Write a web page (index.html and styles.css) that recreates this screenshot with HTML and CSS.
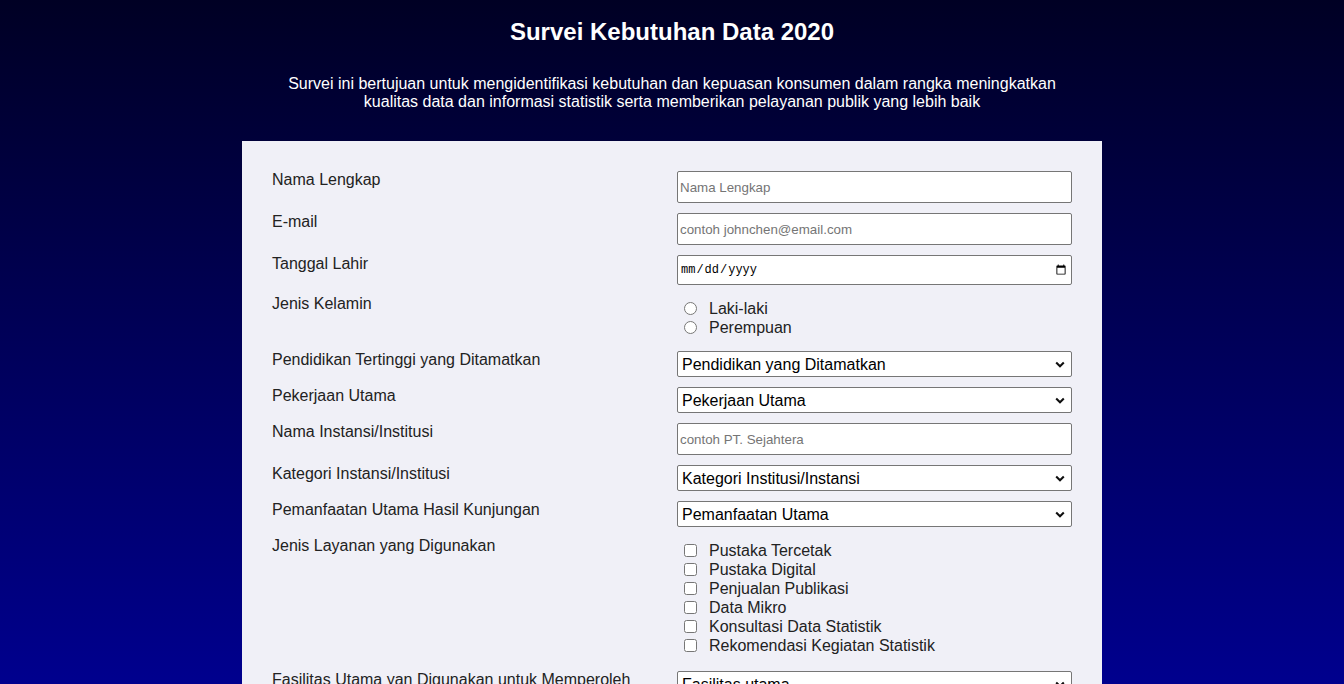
FILE: index.html
```html
<!DOCTYPE html>
<html lang="id">
<head>
<meta charset="utf-8">
<title>Survei Kebutuhan Data 2020</title>
<link rel="stylesheet" href="styles.css">
</head>
<body>
<header class="header">
  <h1 class="title">Survei Kebutuhan Data 2020</h1>
  <p class="intro">Survei ini bertujuan untuk mengidentifikasi kebutuhan dan kepuasan konsumen dalam rangka meningkatkan kualitas data dan informasi statistik serta memberikan pelayanan publik yang lebih baik</p>
</header>
<main class="card">
  <form class="form">
    <label class="label" for="nama">Nama Lengkap</label>
    <input class="field text" id="nama" type="text" placeholder="Nama Lengkap">

    <label class="label" for="email">E-mail</label>
    <input class="field text" id="email" type="email" placeholder="contoh johnchen@email.com">

    <label class="label" for="tgl">Tanggal Lahir</label>
    <input class="field date" id="tgl" type="date">

    <div class="label">Jenis Kelamin</div>
    <div class="choices radios">
      <label class="choice"><input class="radio" type="radio" name="jk"><span>Laki-laki</span></label>
      <label class="choice"><input class="radio" type="radio" name="jk"><span>Perempuan</span></label>
    </div>

    <label class="label" for="pend">Pendidikan Tertinggi yang Ditamatkan</label>
    <select class="field select" id="pend"><option>Pendidikan yang Ditamatkan</option></select>

    <label class="label" for="kerja">Pekerjaan Utama</label>
    <select class="field select" id="kerja"><option>Pekerjaan Utama</option></select>

    <label class="label" for="inst">Nama Instansi/Institusi</label>
    <input class="field text" id="inst" type="text" placeholder="contoh PT. Sejahtera">

    <label class="label" for="kat">Kategori Instansi/Institusi</label>
    <select class="field select" id="kat"><option>Kategori Institusi/Instansi</option></select>

    <label class="label" for="manfaat">Pemanfaatan Utama Hasil Kunjungan</label>
    <select class="field select" id="manfaat"><option>Pemanfaatan Utama</option></select>

    <div class="label">Jenis Layanan yang Digunakan</div>
    <div class="choices checks">
      <label class="choice"><input class="check" type="checkbox"><span>Pustaka Tercetak</span></label>
      <label class="choice"><input class="check" type="checkbox"><span>Pustaka Digital</span></label>
      <label class="choice"><input class="check" type="checkbox"><span>Penjualan Publikasi</span></label>
      <label class="choice"><input class="check" type="checkbox"><span>Data Mikro</span></label>
      <label class="choice"><input class="check" type="checkbox"><span>Konsultasi Data Statistik</span></label>
      <label class="choice"><input class="check" type="checkbox"><span>Rekomendasi Kegiatan Statistik</span></label>
    </div>

    <label class="label" for="fas">Fasilitas Utama yan Digunakan untuk Memperoleh Data</label>
    <select class="field select" id="fas"><option>Fasilitas utama</option></select>

    <label class="label" for="saran">Saran</label>
    <textarea class="field area" id="saran" placeholder="Tuliskan saran Anda"></textarea>
  </form>
</main>
</body>
</html>
```

FILE: styles.css
```css
html {
  background: linear-gradient(to bottom, #000024 0%, #00008e 100%) fixed;
  min-height: 100%;
}

body {
  margin: 0;
  font-family: "Liberation Sans", Arial, sans-serif;
  color: #222;
}

.header {
  padding-top: 18px;
  text-align: center;
  color: #fff;
}

.title {
  margin: 0;
  font-size: 24px;
  font-weight: bold;
  line-height: 27.6px;
}

.intro {
  max-width: 800px;
  margin: 29px auto 30px;
  font-size: 16px;
  line-height: 18.4px;
}

.card {
  width: 860px;
  margin: 0 auto;
  padding: 30px;
  box-sizing: border-box;
  background: #f0f0f7;
}

.form {
  display: grid;
  grid-template-columns: 1fr 1fr;
  column-gap: 10px;
  row-gap: 10px;
  align-items: start;
}

.label {
  font-size: 16px;
  line-height: 18.4px;
  color: #222;
}

.field {
  box-sizing: border-box;
  width: 100%;
  margin: 0;
  border: 1px solid #767676;
  border-radius: 2px;
  background-color: #fff;
  font-family: "Liberation Sans", Arial, sans-serif;
  color: #000;
}

.text {
  height: 32px;
  padding: 0 2px;
  font-size: 13.33px;
}

.text::placeholder,
.area::placeholder {
  color: #757575;
}

.date {
  height: 30px;
  padding: 0 2px;
  font-size: 12px;
  font-family: "Liberation Mono", monospace;
}

.select {
  height: 26px;
  padding: 0 24px 0 4px;
  font-size: 16px;
  appearance: none;
  -webkit-appearance: none;
  background-image: url("data:image/svg+xml,%3Csvg xmlns='http://www.w3.org/2000/svg' width='10' height='7' viewBox='0 0 10 7'%3E%3Cpath d='M1.2 1.5 L5 5.2 L8.8 1.5' fill='none' stroke='%23111' stroke-width='2.1'/%3E%3C/svg%3E");
  background-repeat: no-repeat;
  background-position: right 6px center;
  background-size: 10px 7px;
}

.area {
  height: 80px;
  padding: 3px;
  font-size: 13.33px;
  resize: vertical;
}

.choices {
  display: flex;
  flex-direction: column;
  padding: 4px 0 4px 6px;
}

.checks {
  padding-bottom: 6px;
}

.choice {
  display: flex;
  align-items: center;
  height: 19px;
  font-size: 16px;
  line-height: 19px;
  color: #222;
}

.radio,
.check {
  width: 13px;
  height: 13px;
  margin: 0 12px 1px 1px;
  flex: none;
}
```
